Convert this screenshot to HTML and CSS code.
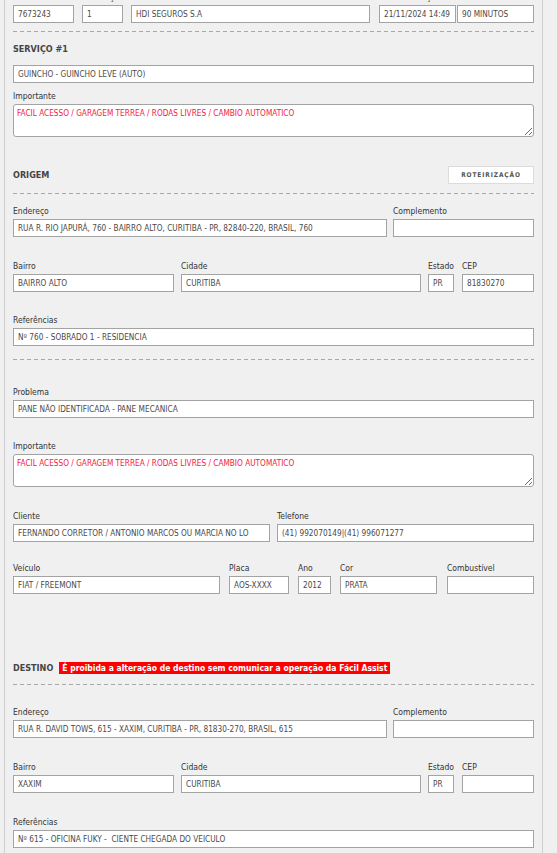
FILE: index.html
```html
<!DOCTYPE html>
<html lang="pt-BR">
<head>
<meta charset="utf-8">
<title>Atendimento</title>
<link rel="stylesheet" href="styles.css">
</head>
<body>
<div class="page">
  <div class="row r-top">
    <div class="field w-assist"><div class="label">Assistência</div><div class="input">7673243</div></div>
    <div class="field w-sol"><div class="label">Solicitação</div><div class="input">1</div></div>
    <div class="field w-prod"><div class="label">Produto</div><div class="input">HDI SEGUROS S.A</div></div>
    <div class="field grow f-date"><div class="label">Data solicitação</div>
      <div class="pair"><div class="input">21/11/2024 14:49</div><div class="input">90 MINUTOS</div></div>
    </div>
  </div>
  <div class="sep m8"></div>

  <div class="title m10">SERVIÇO #1</div>
  <div class="input m9">GUINCHO - GUINCHO LEVE (AUTO)</div>
  <div class="field m6"><div class="label">Importante</div>
    <textarea class="area" readonly>FACIL ACESSO / GARAGEM TERREA / RODAS LIVRES / CAMBIO AUTOMATICO</textarea>
  </div>

  <div class="head m29"><div class="title">ORIGEM</div><div class="btn">ROTEIRIZAÇÃO</div></div>
  <div class="sep m9"></div>

  <div class="row g6 m10">
    <div class="field w-end"><div class="label">Endereço</div><div class="input">RUA R. RIO JAPURÁ, 760 - BAIRRO ALTO, CURITIBA - PR, 82840-220, BRASIL, 760</div></div>
    <div class="field grow"><div class="label">Complemento</div><div class="input"></div></div>
  </div>
  <div class="row m22">
    <div class="field w-bairro"><div class="label">Bairro</div><div class="input">BAIRRO ALTO</div></div>
    <div class="field w-cidade g7l"><div class="label">Cidade</div><div class="input">CURITIBA</div></div>
    <div class="field w-uf g7l"><div class="label">Estado</div><div class="input">PR</div></div>
    <div class="field grow g8l"><div class="label">CEP</div><div class="input">81830270</div></div>
  </div>
  <div class="field m21"><div class="label">Referências</div><div class="input">Nº 760 - SOBRADO 1 - RESIDENCIA</div></div>
  <div class="sep m13"></div>

  <div class="field m25"><div class="label">Problema</div><div class="input">PANE NÃO IDENTIFICADA - PANE MECANICA</div></div>
  <div class="field m21"><div class="label">Importante</div>
    <textarea class="area" readonly>FACIL ACESSO / GARAGEM TERREA / RODAS LIVRES / CAMBIO AUTOMATICO</textarea>
  </div>
  <div class="row m22">
    <div class="field w-cliente"><div class="label">Cliente</div><div class="input">FERNANDO CORRETOR / ANTONIO MARCOS OU MARCIA NO LO</div></div>
    <div class="field grow g7l"><div class="label">Telefone</div><div class="input">(41) 992070149|(41) 996071277</div></div>
  </div>
  <div class="row m19">
    <div class="field w-veiculo"><div class="label">Veículo</div><div class="input">FIAT / FREEMONT</div></div>
    <div class="field w-placa g9l"><div class="label">Placa</div><div class="input">AOS-XXXX</div></div>
    <div class="field w-ano g9l"><div class="label">Ano</div><div class="input">2012</div></div>
    <div class="field w-cor g9l"><div class="label">Cor</div><div class="input">PRATA</div></div>
    <div class="field grow g10l"><div class="label">Combustível</div><div class="input"></div></div>
  </div>

  <div class="head-left m67"><div class="title">DESTINO</div><div class="warn">É proibida a alteração de destino sem comunicar a operação da Fácil Assist</div></div>
  <div class="sep m9"></div>

  <div class="row g6 m20">
    <div class="field w-end"><div class="label">Endereço</div><div class="input">RUA R. DAVID TOWS, 615 - XAXIM, CURITIBA - PR, 81830-270, BRASIL, 615</div></div>
    <div class="field grow"><div class="label">Complemento</div><div class="input"></div></div>
  </div>
  <div class="row m22">
    <div class="field w-bairro"><div class="label">Bairro</div><div class="input">XAXIM</div></div>
    <div class="field w-cidade g7l"><div class="label">Cidade</div><div class="input">CURITIBA</div></div>
    <div class="field w-uf g7l"><div class="label">Estado</div><div class="input">PR</div></div>
    <div class="field grow g8l"><div class="label">CEP</div><div class="input"></div></div>
  </div>
  <div class="field m22"><div class="label">Referências</div><div class="input">Nº 615 - OFICINA FUKY -&nbsp; CIENTE CHEGADA DO VEICULO</div></div>
</div>
</body>
</html>
```

FILE: styles.css
```css
* { box-sizing: border-box; }
html, body { height: 100%; }
body {
  margin: 0;
  background: #f0f0f0;
  font-family: "DejaVu Sans Condensed", "DejaVu Sans", sans-serif;
  font-stretch: condensed;
  color: #333;
  overflow: hidden;
}
.page {
  margin: -10px 0 0 4px;
  width: 539px;
  min-height: 900px;
  border-left: 1px solid #cfcfcf;
  border-right: 1px solid #cfcfcf;
  padding: 0 8px;
}
.row { display: flex; }
.field { display: flex; flex-direction: column; min-width: 0; }
.grow { flex: 1; }
.label {
  font-size: 8.5px;
  line-height: 14px;
  height: 14px;
  margin-bottom: 1px;
  white-space: nowrap;
  color: #333;
}
.input {
  height: 18px;
  border: 1px solid #a3a3a3;
  background: #fff;
  font-size: 8.2px;
  line-height: 16px;
  padding: 0 4px;
  color: #4a4a4a;
  white-space: nowrap;
  overflow: hidden;
}
.pair { display: flex; gap: 1px; }
.pair .input { flex: 1; }
.area {
  display: block;
  width: 100%;
  height: 33px;
  margin: 0;
  border: 1px solid #a3a3a3;
  border-radius: 3px;
  background: #fff;
  font-family: inherit;
  font-stretch: condensed;
  font-size: 8.2px;
  line-height: 10px;
  padding: 3px 3px;
  color: #f3223f;
  resize: vertical;
  outline: none;
}
.sep {
  height: 1px;
  background: repeating-linear-gradient(to right, #a8a8a8 0 4px, transparent 4px 7px);
}
.title {
  font-size: 9px;
  font-weight: bold;
  line-height: 14px;
  color: #444;
}
.head { display: flex; justify-content: space-between; align-items: center; height: 18px; }
.head-left { display: flex; align-items: center; height: 14px; }
.btn {
  width: 86px;
  height: 18px;
  border: 1px solid #dcdcdc;
  background: #fff;
  font-size: 6.5px;
  font-weight: bold;
  letter-spacing: 0.9px;
  color: #555;
  display: flex;
  align-items: center;
  justify-content: center;
}
.warn {
  margin-left: 6px;
  background: #ff0000;
  color: #fff;
  font-size: 8.5px;
  font-weight: bold;
  line-height: 12px;
  padding: 0 3px;
  white-space: nowrap;
}

/* widths */
.w-assist { width: 61px; }
.w-sol { width: 41px; margin-left: 8px; }
.w-prod { width: 239px; margin-left: 8px; }
.f-date { margin-left: 9px; }
.w-end { width: 374px; }
.w-bairro { width: 161px; }
.w-cidade { width: 240px; }
.w-uf { width: 26px; }
.w-cliente { width: 257px; }
.w-veiculo { width: 207px; }
.w-placa { width: 60px; }
.w-ano { width: 33px; }
.w-cor { width: 97px; }
.g6 { gap: 6px; }
.g7l { margin-left: 7px; }
.g8l { margin-left: 8px; }
.g9l { margin-left: 9px; }
.g10l { margin-left: 10px; }

/* vertical rhythm */
.m6 { margin-top: 6px; }
.m8 { margin-top: 8px; }
.m9 { margin-top: 9px; }
.m10 { margin-top: 10px; }
.m13 { margin-top: 13px; }
.m19 { margin-top: 19px; }
.m20 { margin-top: 20px; }
.m21 { margin-top: 21px; }
.m22 { margin-top: 22px; }
.m25 { margin-top: 25px; }
.m29 { margin-top: 29px; }
.m67 { margin-top: 67px; }
```
